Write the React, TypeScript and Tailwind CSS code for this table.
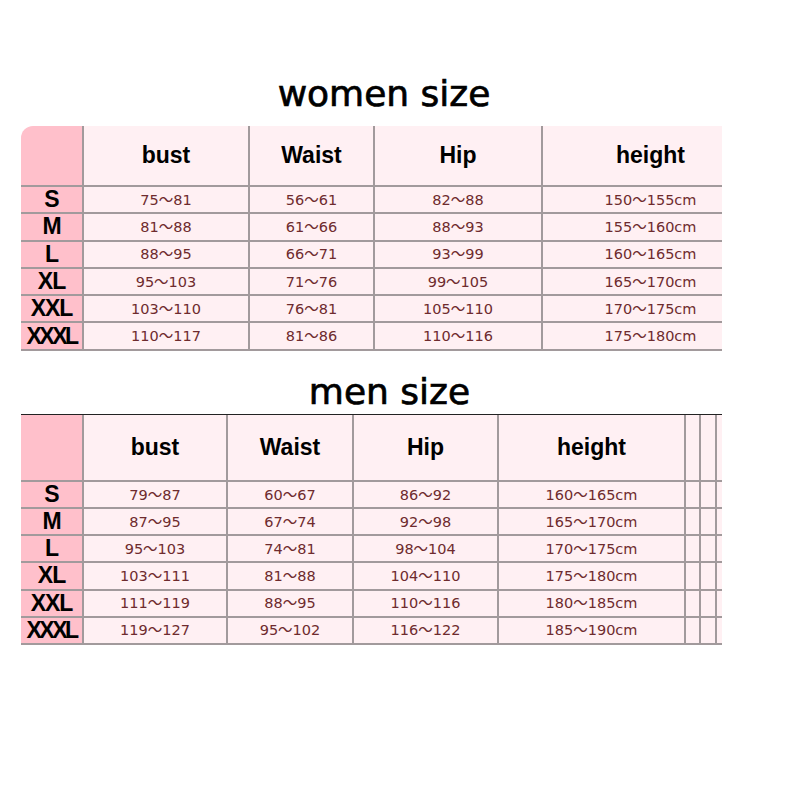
const women = {
  cols: [166, 125, 168, 179],
  rows: [
    ["S", "75～81", "56～61", "82～88", "150～155cm"],
    ["M", "81～88", "61～66", "88～93", "155～160cm"],
    ["L", "88～95", "66～71", "93～99", "160～165cm"],
    ["XL", "95～103", "71～76", "99～105", "165～170cm"],
    ["XXL", "103～110", "76～81", "105～110", "170～175cm"],
    ["XXXL", "110～117", "81～86", "110～116", "175～180cm"],
  ],
};

const men = {
  cols: [144, 126, 145, 187],
  rows: [
    ["S", "79～87", "60～67", "86～92", "160～165cm"],
    ["M", "87～95", "67～74", "92～98", "165～170cm"],
    ["L", "95～103", "74～81", "98～104", "170～175cm"],
    ["XL", "103～111", "81～88", "104～110", "175～180cm"],
    ["XXL", "111～119", "88～95", "110～116", "180～185cm"],
    ["XXXL", "119～127", "95～102", "116～122", "185～190cm"],
  ],
};

const headers = ["bust", "Waist", "Hip", "height"];

const labelFont = { fontFamily: '"Liberation Sans", Arial, sans-serif' };
const dataFont = { fontFamily: '"DejaVu Sans", "Noto Sans CJK SC", sans-serif' };

const SizeCell = ({ label, h }: { label: string; h: string }) => (
  <div
    className={`${h} w-[63px] shrink-0 flex items-center justify-center bg-[#ffc0cb] border-r-2 border-b-2 border-[#a29a9c] text-[23px] font-bold text-black leading-none ${
      label === "XXXL" ? "tracking-[-2.5px]" : "tracking-[-1px]"
    }`}
    style={labelFont}
  >
    {label}
  </div>
);

const WomenTable = () => (
  <div className="ml-[21px] w-[701px]">
    <div className="flex h-[61px]">
      <div className="h-[61px] w-[63px] shrink-0 bg-[#ffc0cb] rounded-tl-[12px] border-r-2 border-b-2 border-[#a29a9c]" />
      {headers.map((h, i) => (
        <div
          key={h}
          className={`h-[61px] flex items-center justify-center bg-[#fff0f3] border-b-2 border-[#a29a9c] text-[23px] font-bold text-black ${
            i < 3 ? "border-r-2" : "pl-[36px]"
          }`}
          style={{ ...labelFont, width: women.cols[i] }}
        >
          {h}
        </div>
      ))}
    </div>
    {women.rows.map((r) => (
      <div key={r[0]} className="flex h-[27.3px]">
        <SizeCell label={r[0]} h="h-[27.3px]" />
        {r.slice(1).map((v, i) => (
          <div
            key={i}
            className={`h-[27.3px] flex items-center justify-center pt-[2px] bg-[#fff0f3] border-b-2 border-[#a29a9c] text-[14.5px] text-[#6e2b2e] ${
              i < 3 ? "border-r-2" : "pl-[36px]"
            }`}
            style={{ ...dataFont, width: women.cols[i] }}
          >
            {v}
          </div>
        ))}
      </div>
    ))}
  </div>
);

const Extra = ({ h }: { h: string }) => (
  <>
    <div className={`${h} w-[15px] shrink-0 bg-[#fff0f3] border-r-2 border-b-2 border-[#a29a9c]`} />
    <div className={`${h} w-[16px] shrink-0 bg-[#fff0f3] border-r-2 border-b-2 border-[#a29a9c]`} />
    <div className={`${h} w-[5px] shrink-0 bg-[#fff0f3] border-b-2 border-[#a29a9c]`} />
  </>
);

const MenTable = () => (
  <div className="ml-[21px] w-[701px] border-t border-[#222]">
    <div className="flex h-[67px]">
      <div className="h-[67px] w-[63px] shrink-0 bg-[#ffc0cb] border-r-2 border-b-2 border-[#a29a9c]" />
      {headers.map((h, i) => (
        <div
          key={h}
          className="h-[67px] flex items-center justify-center bg-[#fff0f3] border-r-2 border-b-2 border-[#a29a9c] text-[23px] font-bold text-black"
          style={{ ...labelFont, width: men.cols[i] }}
        >
          {h}
        </div>
      ))}
      <Extra h="h-[67px]" />
    </div>
    {men.rows.map((r) => (
      <div key={r[0]} className="flex h-[27.2px]">
        <SizeCell label={r[0]} h="h-[27.2px]" />
        {r.slice(1).map((v, i) => (
          <div
            key={i}
            className="h-[27.2px] flex items-center justify-center pt-[2px] bg-[#fff0f3] border-r-2 border-b-2 border-[#a29a9c] text-[14.5px] text-[#6e2b2e]"
            style={{ ...dataFont, width: men.cols[i] }}
          >
            {v}
          </div>
        ))}
        <Extra h="h-[27.2px]" />
      </div>
    ))}
  </div>
);

export default function App() {
  return (
    <div className="w-[800px] h-[800px] bg-white pt-[76px]">
      <div
        className="w-[768px] text-center text-[36px] leading-[36px] text-black [-webkit-text-stroke:0.7px_black]"
        style={{ fontFamily: '"DejaVu Sans", sans-serif' }}
      >
        women size
      </div>
      <div className="mt-[14px]">
        <WomenTable />
      </div>
      <div
        className="mt-[23px] w-[779px] text-center text-[36px] leading-[36px] text-black [-webkit-text-stroke:0.7px_black]"
        style={{ fontFamily: '"DejaVu Sans", sans-serif' }}
      >
        men size
      </div>
      <div className="mt-[4px]">
        <MenTable />
      </div>
    </div>
  );
}
